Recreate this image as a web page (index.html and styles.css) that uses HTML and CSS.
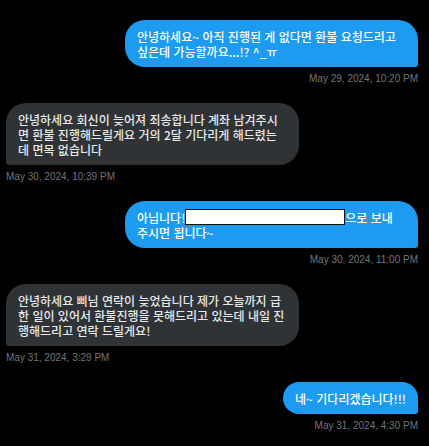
FILE: index.html
```html
<!DOCTYPE html>
<html lang="ko">
<head>
    <meta charset="UTF-8">
    <meta name="viewport" content="width=device-width, initial-scale=1.0">
    <title>메시지</title>
    <link rel="stylesheet" href="styles.css">
</head>
<body>
    <div class="chat">
        <div class="msg sent">
            <div class="bubble">안녕하세요~ 아직 진행된 게 없다면 환불 요청드리고 싶은데 가능할까요...!? ^_ㅠ</div>
            <div class="time">May 29, 2024, 10:20 PM</div>
        </div>

        <div class="msg received">
            <div class="bubble">안녕하세요 회신이 늦어져 죄송합니다 계좌 남겨주시면 환불 진행해드릴게요 거의 2달 기다리게 해드렸는데 면목 없습니다</div>
            <div class="time">May 30, 2024, 10:39 PM</div>
        </div>

        <div class="msg sent">
            <div class="bubble">아닙니다!<span class="redact"></span>으로 보내 주시면 됩니다~</div>
            <div class="time">May 30, 2024, 11:00 PM</div>
        </div>

        <div class="msg received">
            <div class="bubble">안녕하세요 삐님 연락이 늦었습니다 제가 오늘까지 급한 일이 있어서 환불진행을 못해드리고 있는데 내일 진행해드리고 연락 드릴게요!</div>
            <div class="time">May 31, 2024, 3:29 PM</div>
        </div>

        <div class="msg sent">
            <div class="bubble">네~ 기다리겠습니다!!!</div>
            <div class="time">May 31, 2024, 4:30 PM</div>
        </div>
    </div>
</body>
</html>
```

FILE: styles.css
```css
body {
    margin: 0;
    background-color: #000;
    color: #e7e9ea;
    font-family: "Noto Sans CJK KR", "Noto Sans", sans-serif;
}
.chat {
    display: flex;
    flex-direction: column;
    gap: 18px;
    padding: 20px 11px 0 6px;
}
.msg {
    display: flex;
    flex-direction: column;
}
.msg.sent {
    align-items: flex-end;
}
.msg.received {
    align-items: flex-start;
}
.bubble {
    max-width: 293px;
    box-sizing: border-box;
    padding: 9px 12px 8px;
    border-radius: 20px;
    font-size: 12px;
    font-weight: 500;
    line-height: 15px;
}
.sent .bubble {
    background-color: #1d9bf0;
    color: #fff;
    border-bottom-right-radius: 3px;
}
.received .bubble {
    background-color: #2f3336;
    border-bottom-left-radius: 3px;
}
.redact {
    display: inline-block;
    width: 160px;
    height: 16px;
    margin-top: -1px;
    box-sizing: border-box;
    background-color: #fff;
    border: 1px solid #111;
    vertical-align: top;
}
.time {
    margin-top: 6px;
    font-family: "Liberation Sans", Arial, sans-serif;
    font-size: 10px;
    line-height: 12px;
    color: #71767b;
}
```
